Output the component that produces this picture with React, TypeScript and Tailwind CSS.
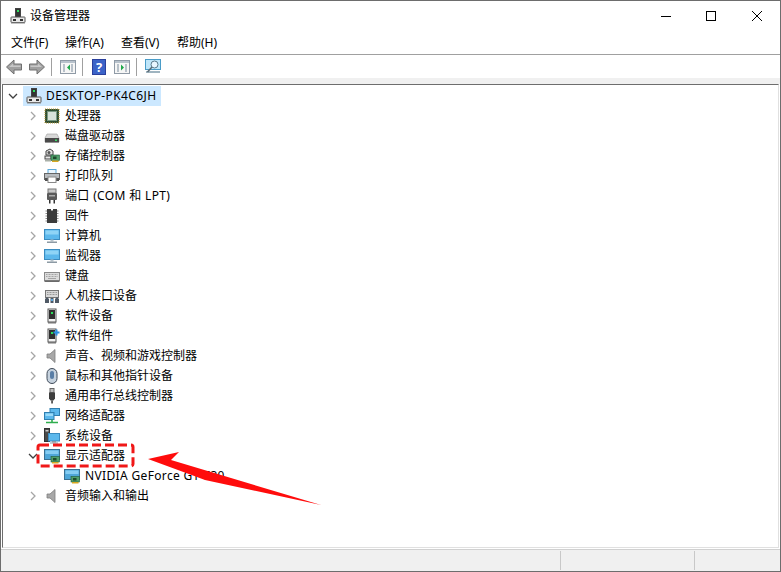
const FONT = "font-['Noto_Sans','Noto_Sans_CJK_SC',sans-serif]";

function Chip({ x = 8, y = 9 }: { x?: number; y?: number }) {
  // small green adapter board used on the display and storage icons
  return (
    <g transform={`translate(${x} ${y})`}>
      <rect x="0" y="0" width="8.500" height="5.500" fill="#4f9f6a" stroke="#1f5a38" strokeWidth="0.600" />
      <rect x="2" y="1.500" width="3.500" height="2.500" fill="#1d4a2c" />
      <rect x="1" y="5.500" width="6.500" height="1.500" fill="#d8a820" />
    </g>
  );
}

function Tower({ plus = false }: { plus?: boolean }) {
  return (
    <>
      <rect x="4" y="1" width="8" height="13" fill="#f4f4f4" stroke="#555" />
      <rect x="5" y="2" width="6" height="9" fill="#2f2f2f" />
      <rect x="7" y="4" width="2" height="2" fill="#27e05a" />
      <rect x="4" y="14" width="8" height="1.500" fill="#777" />
      {plus && (
        <path d="M11.500 1.500h2v2h2v2h-2v2h-2v-2h-2v-2h2z" fill="#2b8fe0" />
      )}
    </>
  );
}

function Computer() {
  return (
    <>
      <rect x="5.500" y="0.500" width="5" height="9" fill="#333" stroke="#444" />
      <rect x="7" y="2" width="2" height="2" fill="#2fe060" />
      <rect x="1" y="9" width="14" height="5.500" rx="0.500" fill="#e8e8e8" stroke="#555" />
      <rect x="3" y="11" width="3" height="2" fill="#333" />
      <rect x="10" y="11" width="3" height="2" fill="#333" />
      <rect x="1" y="14.500" width="14" height="1" fill="#888" />
    </>
  );
}

function Monitor() {
  return (
    <>
      <rect x="0.500" y="1.500" width="15" height="10" fill="#5cb8ec" stroke="#3b8cc0" />
      <rect x="1.500" y="2.500" width="13" height="4" fill="#8fd4f6" />
      <rect x="6.500" y="11.500" width="3" height="2" fill="#b8c4cc" />
      <rect x="3" y="13.500" width="10" height="1.500" fill="#8c9aa4" />
    </>
  );
}

function Speaker() {
  return (
    <path d="M3 6h3l5-4.500v13l-5-4.500h-3z" fill="#a8a8a8" stroke="#7d7d7d" strokeWidth="0.800" />
  );
}

const ICONS: Record<string, React.ReactNode> = {
  computer: <Computer />,
  cpu: (
    <>
      <rect x="1" y="1" width="14" height="14" fill="#2f4f34" stroke="#b89a3c" strokeDasharray="1 1" />
      <rect x="3.500" y="3.500" width="9" height="9" fill="#d8e2da" stroke="#7b9a84" />
    </>
  ),
  disk: (
    <>
      <path d="M3 6h10l2 4v4h-14v-4z" fill="#d8d8d8" stroke="#9a9a9a" strokeWidth="0.600" />
      <rect x="1" y="10" width="14" height="4.500" fill="#4a4a4a" />
      <rect x="11" y="11.500" width="2" height="1.500" fill="#3ee06a" />
    </>
  ),
  storage: (
    <>
      <path d="M2 3l4-2 3 2v4h-7z" fill="#e4e4e4" stroke="#444" />
      <circle cx="5" cy="4.500" r="1.500" fill="#555" />
      <rect x="1" y="8" width="6" height="3" fill="#e8e8e8" stroke="#444" />
      <Chip x={7} y={7} />
      <rect x="1" y="12" width="6" height="1.500" fill="#aab0a8" />
    </>
  ),
  printer: (
    <>
      <rect x="4" y="1.500" width="8" height="4" fill="#eaf6ff" stroke="#5aa8d8" />
      <rect x="0.500" y="5.500" width="15" height="6" fill="#b8bcc0" stroke="#666" />
      <rect x="1" y="10" width="14" height="3" fill="#505050" />
      <rect x="4" y="9" width="8" height="5.500" fill="#fff" stroke="#888" />
    </>
  ),
  port: (
    <>
      <rect x="4" y="1" width="8" height="4" fill="#c8c8c8" stroke="#777" />
      <rect x="3" y="5" width="10" height="7" rx="1" fill="#5a5a5a" />
      <rect x="5" y="7" width="6" height="1.500" fill="#aaa" />
      <rect x="5" y="12" width="1.500" height="3.500" fill="#333" />
      <rect x="9.500" y="12" width="1.500" height="3.500" fill="#333" />
    </>
  ),
  firmware: (
    <>
      <rect x="3" y="1" width="10" height="14" fill="#3c3c3c" />
      <path d="M7 1h2v1.500h-2z" fill="#fff" />
      <path d="M1.500 3h1.500M1.500 5.500h1.500M1.500 8h1.500M1.500 10.500h1.500M1.500 13h1.500M13 3h1.500M13 5.500h1.500M13 8h1.500M13 10.500h1.500M13 13h1.500" stroke="#8a8a8a" />
    </>
  ),
  monitor: <Monitor />,
  keyboard: (
    <>
      <rect x="0.500" y="4.500" width="15" height="8" fill="#dcdcdc" stroke="#8a8a8a" />
      <path d="M2 6.500h12M2 8.500h12" stroke="#a4a4a4" strokeDasharray="1 0.500" />
      <rect x="4" y="10" width="8" height="1" fill="#a4a4a4" />
      <rect x="0.500" y="12.500" width="15" height="1.500" fill="#6a6a6a" />
    </>
  ),
  hid: (
    <>
      <rect x="1.500" y="2.500" width="13" height="7" fill="#d8d8d8" stroke="#777" />
      <path d="M3 4.500h10M3 6.500h10" stroke="#999" strokeDasharray="1 0.500" />
      <path d="M1 15v-4l2-2 2 2v4zM6.500 15v-5h3v5zM11 15v-4l2-2 2 2v4z" fill="#505a66" />
      <rect x="7" y="11" width="2" height="2" fill="#5aa8e0" />
    </>
  ),
  software: <Tower />,
  component: <Tower plus />,
  sound: <Speaker />,
  mouse: (
    <>
      <rect x="3" y="0.500" width="10" height="15" rx="5" fill="#c6d2de" stroke="#3f4a58" />
      <rect x="6" y="3" width="4" height="8" rx="2" fill="#5a7ea6" />
    </>
  ),
  usb: (
    <>
      <rect x="6" y="0.500" width="4" height="4" fill="#bdbdbd" stroke="#666" />
      <path d="M5 4.500h6v6l-1.500 2h-3l-1.500-2z" fill="#3e3e3e" />
      <rect x="7.300" y="12.500" width="1.500" height="3" fill="#333" />
    </>
  ),
  network: (
    <>
      <rect x="6" y="0.500" width="9.500" height="7" fill="#5cb8ec" stroke="#2f7fb0" />
      <rect x="0.500" y="4.500" width="9.500" height="7" fill="#5cb8ec" stroke="#2f7fb0" />
      <rect x="1.500" y="5.500" width="7.500" height="2.500" fill="#9adaf8" />
      <path d="M2 14.500h12M8 11.500v3" stroke="#2fae4e" strokeWidth="1.600" />
    </>
  ),
  system: (
    <>
      <rect x="0.500" y="0.500" width="5" height="13" fill="#4a4a4a" stroke="#333" />
      <rect x="1.500" y="2" width="3" height="1.500" fill="#ccc" />
      <rect x="4.500" y="5.500" width="11" height="7.500" fill="#5cb8ec" stroke="#3b8cc0" />
      <rect x="8" y="13" width="4" height="1.500" fill="#8c9aa4" />
      <rect x="6" y="14.500" width="8" height="1" fill="#8c9aa4" />
    </>
  ),
  display: (
    <>
      <rect x="0.500" y="1.500" width="15" height="10" fill="#4ea6d8" stroke="#3a6f90" />
      <rect x="1.500" y="2.500" width="13" height="3.500" fill="#86cdf2" />
      <Chip x={7} y={8.500} />
    </>
  ),
};

function Icon({ name }: { name: string }) {
  return (
    <svg width="16" height="16" viewBox="0 0 16 16" className="shrink-0">
      {ICONS[name]}
    </svg>
  );
}

function Chevron({ open = false }: { open?: boolean }) {
  return (
    <svg width="16" height="16" viewBox="0 0 16 16" className="shrink-0">
      {open ? (
        <path d="M4 6l4 4 4-4" fill="none" stroke="#404040" strokeWidth="1.300" />
      ) : (
        <path d="M6 4l4 4-4 4" fill="none" stroke="#a6a6a6" strokeWidth="1.300" />
      )}
    </svg>
  );
}

const DEVICES = [
  { icon: "cpu", label: "处理器" },
  { icon: "disk", label: "磁盘驱动器" },
  { icon: "storage", label: "存储控制器" },
  { icon: "printer", label: "打印队列" },
  { icon: "port", label: "端口 (COM 和 LPT)", latin: true },
  { icon: "firmware", label: "固件" },
  { icon: "monitor", label: "计算机" },
  { icon: "monitor", label: "监视器" },
  { icon: "keyboard", label: "键盘" },
  { icon: "hid", label: "人机接口设备" },
  { icon: "software", label: "软件设备" },
  { icon: "component", label: "软件组件" },
  { icon: "sound", label: "声音、视频和游戏控制器" },
  { icon: "mouse", label: "鼠标和其他指针设备" },
  { icon: "usb", label: "通用串行总线控制器" },
  { icon: "network", label: "网络适配器" },
  { icon: "system", label: "系统设备" },
];

function DeviceRow({ icon, label, open, latin }: { icon: string; label: string; open?: boolean; latin?: boolean }) {
  return (
    <div className="flex h-5 items-center pl-[22px]">
      <Chevron open={open} />
      <div className="ml-[3px] flex items-center gap-[5px]">
        <Icon name={icon} />
        <span className={latin ? "tracking-[0.35px]" : ""}>{label}</span>
      </div>
    </div>
  );
}

function ToolbarArrow({ flip = false }: { flip?: boolean }) {
  return (
    <svg width="16" height="16" viewBox="0 0 16 16" className={flip ? "shrink-0 -scale-x-100" : "shrink-0"}>
      <path d="M0.500 8l7.500-7v4h7.500v6h-7.500v4z" fill="#a0a0a0" stroke="#707070" />
      <path d="M3 8l4-3.500v2h7.500v1.500z" fill="#c8c8c8" />
    </svg>
  );
}

function PaneIcon({ right = false }: { right?: boolean }) {
  return (
    <svg width="16" height="16" viewBox="0 0 16 16" className="shrink-0">
      <rect x="0.500" y="1.500" width="15" height="13" fill="#f6f6f6" stroke="#8f9aa6" />
      <rect x="1" y="2" width="14" height="2" fill="#b8c2cc" />
      <path d="M3 6h2M3 8h2M3 10h2M3 12h2M11 6h2M11 8h2M11 10h2M11 12h2" stroke="#7a8c9c" />
      {right ? (
        <path d="M7 5.500l3 3-3 3z" fill="#1fa84a" />
      ) : (
        <path d="M10 5.500l-3 3 3 3z" fill="#1fa84a" />
      )}
    </svg>
  );
}

function Separator() {
  return <div className="h-[18px] w-px shrink-0 bg-[#a0a0a0]" />;
}

export default function App() {
  return (
    <div className={`relative flex h-[572px] w-[781px] flex-col overflow-hidden border border-[#6d6d6d] bg-white text-xs text-black ${FONT}`}>
      <div className="flex h-[30px] shrink-0 items-center pl-[9px]">
        <svg width="16" height="16" viewBox="0 0 16 16" className="shrink-0">
          <Computer />
        </svg>
        <span className="ml-1">设备管理器</span>
        <div className="ml-auto flex items-center pr-[18px]">
          <div className="h-px w-[10px] bg-black" />
          <div className="ml-[35px] h-[10px] w-[10px] border border-black" />
          <svg width="10" height="10" viewBox="0 0 10 10" className="ml-[36px]">
            <path d="M0 0l10 10M10 0l-10 10" stroke="#000" strokeWidth="1" />
          </svg>
        </div>
      </div>

      <div className="flex h-[24px] shrink-0 items-center border-b border-[#a0a0a0] pl-[10px] pt-px">
        <span className="w-[54px]">文件(F)</span>
        <span className="w-[56px]">操作(A)</span>
        <span className="w-[56px]">查看(V)</span>
        <span>帮助(H)</span>
      </div>

      <div className="flex h-[23px] shrink-0 items-center pl-[5px] pt-px">
        <ToolbarArrow />
        <div className="ml-[7px]">
          <ToolbarArrow flip />
        </div>
        <div className="ml-[6px]"><Separator /></div>
        <div className="ml-2"><PaneIcon /></div>
        <div className="ml-[6px]"><Separator /></div>
        <svg width="14" height="16" viewBox="0 0 14 16" className="ml-[9px] shrink-0">
          <rect width="14" height="16" fill="#2a3f9c" />
          <rect x="1" y="1" width="12" height="14" fill="#3b63c8" />
          <text x="7" y="13" textAnchor="middle" fontSize="13" fontWeight="700" fill="#fff">?</text>
        </svg>
        <div className="ml-2"><PaneIcon right /></div>
        <div className="ml-[6px]"><Separator /></div>
        <svg width="16" height="16" viewBox="0 0 16 16" className="ml-2 shrink-0">
          <rect x="0.500" y="0.500" width="15" height="10" fill="#bfe6fa" stroke="#4a9cc8" />
          <rect x="1" y="12" width="14" height="2" fill="#9fb4c0" />
          <circle cx="9.500" cy="5.500" r="3.500" fill="#e8f6ff" stroke="#5a7a8c" />
          <path d="M7 8l-4.500 5" stroke="#5a6a74" strokeWidth="1.500" />
        </svg>
      </div>

      <div className="h-[6px] shrink-0 bg-[#f0f0f0]" />

      <div className="mx-px flex min-h-0 flex-1 flex-col border border-t-[#6d6d6d] border-l-[#6d6d6d] border-b-[#e0e0e0] border-r-[#e0e0e0] pt-px">
        <div className="flex h-5 items-center pl-[2px]">
          <Chevron open />
          <div className="ml-[2px] flex h-5 items-center gap-[4px] bg-[#cce8ff] pl-[3px] pr-[4px]">
            <svg width="16" height="16" viewBox="0 0 16 16" className="shrink-0">
              <Computer />
            </svg>
            <span className="tracking-[0.4px]">DESKTOP-PK4C6JH</span>
          </div>
        </div>
        {DEVICES.map((d) => (
          <DeviceRow key={d.label} icon={d.icon} label={d.label} latin={d.latin} />
        ))}
        <DeviceRow icon="display" label="显示适配器" open />
        <div className="flex h-5 items-center gap-[5px] pl-[61px]">
          <Icon name="display" />
          <span className="tracking-[0.35px]">NVIDIA GeForce GT 730</span>
        </div>
        <DeviceRow icon="sound" label="音频输入和输出" />
      </div>

      <div className="mt-px flex h-[22px] shrink-0 items-stretch border-t border-[#d0d0d0] bg-[#f0f0f0] py-px">
        <div className="w-[560px] border-r border-[#c8c8c8]" />
        <div className="w-[134px] border-r border-[#c8c8c8]" />
        <div className="flex-1" />
      </div>

      {/* red annotation drawn over the screenshot */}
      <svg width="781" height="572" viewBox="0 0 781 572" className="pointer-events-none absolute -left-px -top-px">
        <rect x="38" y="445" width="95" height="21" rx="2" fill="none" stroke="#f01818" strokeWidth="3" strokeDasharray="9 4" />
        <path d="M148 459L179 452L171 460L321 505L205 480L197 477Z" fill="#ff0c0c" />
      </svg>
    </div>
  );
}
